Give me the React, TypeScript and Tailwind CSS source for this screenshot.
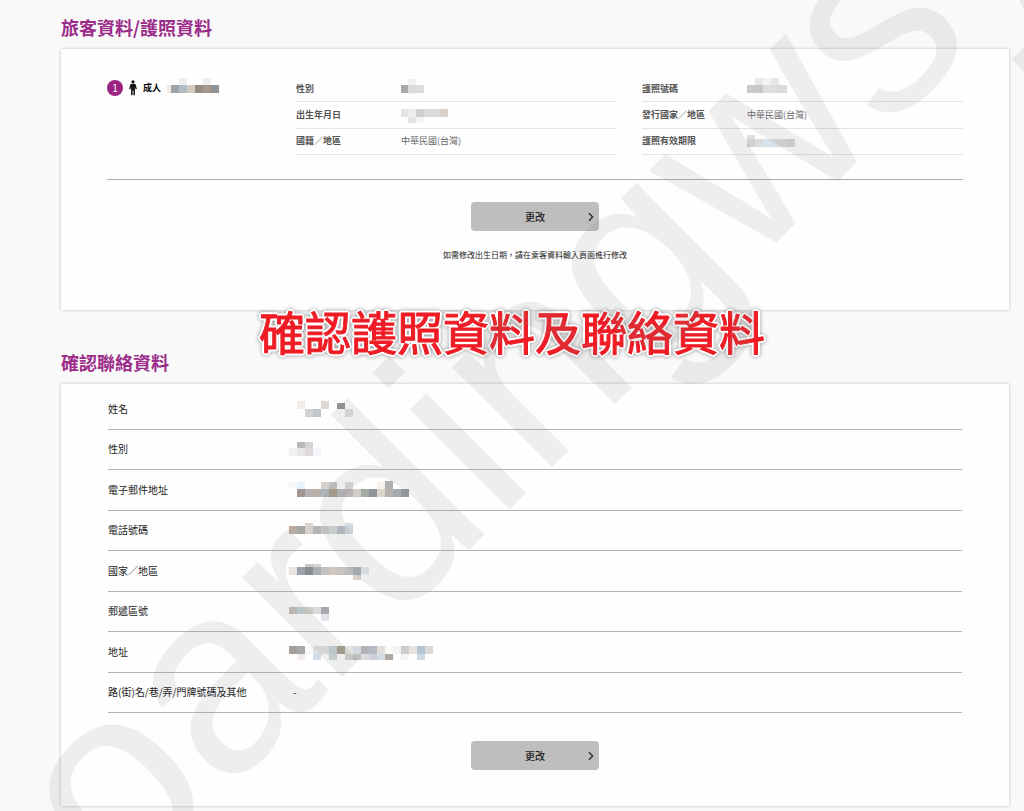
import type { ReactNode } from "react";

type Strip = { x: number; y: number; h?: number; cells: string[] };

const CELL = 8;

/** Pixelated block that hides a private value. An empty string leaves a cell blank. */
function Redacted({ strips, width, height = 24 }: { strips: Strip[]; width: number; height?: number }) {
  return (
    <svg width={width} height={height} viewBox={`0 0 ${width} ${height}`} aria-hidden="true" shapeRendering="crispEdges">
      {strips.flatMap((s, i) =>
        s.cells.map((c, j) =>
          c ? <rect key={`${i}-${j}`} x={s.x + j * CELL} y={s.y} width={CELL} height={s.h ?? 8} fill={c} /> : null,
        ),
      )}
    </svg>
  );
}

function SectionTitle({ children }: { children: ReactNode }) {
  return <h2 className="mb-2.5 text-[18px] leading-6 font-bold text-[#9b2c8a]">{children}</h2>;
}

function Card({ children }: { children: ReactNode }) {
  return (
    <div className="flex flex-col bg-[#fefefe] px-[46px] shadow-[0_0_3px_rgba(0,0,0,0.25)]">{children}</div>
  );
}

function EditButton() {
  return (
    <button
      type="button"
      className="relative h-[29px] w-32 self-center rounded-[4px] bg-[#bdbebd] text-[10px] font-medium text-[#222]"
    >
      更改
      <svg className="absolute top-2.5 right-1 h-[10px] w-2" viewBox="0 0 8 10" fill="none" aria-hidden="true">
        <path d="M2 1.2 L5.6 5 L2 8.8" stroke="#333" strokeWidth="1.5" />
      </svg>
    </button>
  );
}

function PersonIcon() {
  return (
    <svg className="h-4 w-2" viewBox="0 0 8 16" fill="#111" aria-hidden="true">
      <circle cx="4" cy="1.9" r="1.6" />
      <path d="M2.4 4h3.2c.8 0 1.1.4 1.300 1.100L7.800 9l-1.100.4L5.900 7V15.300H4.400V10.500H3.600v4.800H2.100V7L1.300 9.400.2 9l.9-3.900C1.300 4.400 1.600 4 2.400 4z" />
    </svg>
  );
}

type Field = { label: string; value: ReactNode };

const personal: Field[] = [
  {
    label: "性別",
    value: (
      <Redacted
        width={24}
        strips={[
          { x: 7, y: 2, h: 6, cells: ["#f1f1f3"] },
          { x: -1, y: 8, cells: ["#a9a9a9", "#dadadc", "#dcdddd"] },
          { x: 7, y: 16, h: 2, cells: ["#f4f2f4"] },
        ]}
      />
    ),
  },
  {
    label: "出生年月日",
    value: (
      <Redacted
        width={48}
        strips={[
          { x: -1, y: 6, cells: ["#e8e4e5", "#ededee", "#cfcfd0", "#dcdcdd", "#dadbdc", "#d8d0ca"] },
          { x: 7, y: 14, h: 6, cells: ["#e5e5e6", "#f5f5f5"] },
        ]}
      />
    ),
  },
  { label: "國籍／地區", value: "中華民國(台灣)" },
];

const passport: Field[] = [
  {
    label: "護照號碼",
    value: (
      <Redacted
        width={48}
        strips={[
          { x: 8, y: 1, h: 7, cells: ["#e9e9e8", "#f2f2f1", "#e8e7e4"] },
          { x: 0, y: 8, cells: ["#cacaca", "#c6c7c9", "#dedede", "#dddddd", "#dbdbdc"] },
        ]}
      />
    ),
  },
  { label: "發行國家／地區", value: "中華民國(台灣)" },
  {
    label: "護照有效期限",
    value: (
      <Redacted
        width={48}
        strips={[
          { x: 0, y: 6, h: 4, cells: ["#dededc"] },
          { x: 0, y: 10, cells: ["#d2d2d1", "#dcdcdb", "#d9e3ec", "#d8dee2", "#d9dbdb", "#d5d5d5"] },
        ]}
      />
    ),
  },
];

const contact: Field[] = [
  {
    label: "姓名",
    value: (
      <Redacted
        width={64}
        strips={[
          { x: 8, y: 4, cells: ["#f3ebe8", "", "", "#ddd8d2"] },
          { x: 16, y: 12, cells: ["#cfd1d2", "#bfc7ca"] },
          { x: 48, y: 6, h: 6, cells: ["#909193"] },
          { x: 56, y: 12, cells: ["#dedede"] },
        ]}
      />
    ),
  },
  {
    label: "性別",
    value: (
      <Redacted
        width={40}
        strips={[
          { x: 8, y: 5, h: 6, cells: ["#b7b8b8", "#d3d4d6"] },
          { x: 0, y: 11, cells: ["#f1f1f1", "#e7e6e8", "#e0dbdb", "#f6f6fa"] },
        ]}
      />
    ),
  },
  {
    label: "電子郵件地址",
    value: (
      <Redacted
        width={120}
        strips={[
          { x: 0, y: 4, h: 7, cells: ["#f8f8f9", "#e8f2fb", "", "", "#d5d0cb", "#c5c4c1", "", "#d9dbdd", "", "", "", "#f6f2ef"] },
          { x: 96, y: 3, cells: ["#b2b0ae"] },
          {
            x: 8,
            y: 11,
            cells: [
              "#a0968f", "#b5b1b0", "#b8b0a8", "#aeb4b8", "#a99c8c", "#b4b5b7", "#bcb6b6",
              "#d4cdc6", "#a5aba6", "#909497", "#dfd6cb", "#b5b2b0", "#a5adb3", "#929698",
            ],
          },
        ]}
      />
    ),
  },
  {
    label: "電話號碼",
    value: (
      <Redacted
        width={64}
        strips={[
          { x: 16, y: 5, h: 3, cells: ["#d9d5d0", "", "", "", "", "#d8dde1"] },
          { x: 0, y: 8, cells: ["#bbaba1", "#a6a7a5", "#d6d1cc", "#b3b6b7", "#c9c9cb", "#d3d7d8", "#b6bec7", "#ced5da"] },
        ]}
      />
    ),
  },
  {
    label: "國家／地區",
    value: (
      <Redacted
        width={80}
        strips={[
          { x: 16, y: 5, h: 3, cells: ["#c9c8c5", "#d4d3d1"] },
          { x: 0, y: 8, cells: ["#e7e4e1", "#9ba4ad", "#888d92", "#a9b1b5", "#c5c1c3", "#d2c5b9", "#c4c3c1", "#bcbbbe", "#a8afb4"] },
          { x: 72, y: 8, h: 7, cells: ["#e0eaf1"] },
          { x: 64, y: 16, h: 5, cells: ["#d9d2cd"] },
        ]}
      />
    ),
  },
  {
    label: "郵遞區號",
    value: (
      <Redacted
        width={40}
        strips={[
          { x: 0, y: 8, h: 7, cells: ["#c0bdb9", "#c2d0d7", "#ceccc6", "#dadada", "#a7a8ac"] },
          { x: 32, y: 15, h: 7, cells: ["#e3e4e9"] },
        ]}
      />
    ),
  },
  {
    label: "地址",
    value: (
      <Redacted
        width={144}
        strips={[
          {
            x: 0,
            y: 6,
            cells: [
              "#a69e98", "#a9a8aa", "#f8f8f8", "#dfe2e6", "#e0e0e1", "#c5cfd6", "#a39f8e", "#e3e3e1", "#d1d8df",
              "#b5b0b4", "#b6bac7", "#e2dfdc", "#fbfbf6", "#f3f3f1", "#cdcecb", "#e6e3df", "#b6c5d2", "#d9d9da",
            ],
          },
          {
            x: 0,
            y: 14,
            h: 6,
            cells: ["", "#f2ecee", "", "#cedceb", "", "#cfd5d6", "", "#d0d3d1", "#bfbfbd", "#dbdadd", "#ceced8", "#d5dce7", "#afa7a1", "", "#f5f5f5", "", "#cfd8df"],
          },
        ]}
      />
    ),
  },
  { label: "路(街)名/巷/弄/門牌號碼及其他", value: <span className="pl-1">-</span> },
];

function PassengerFields({ fields }: { fields: Field[] }) {
  return (
    <dl className="grid min-h-[79px] flex-1 auto-rows-fr text-[9px] leading-3">
      {fields.map((f) => (
        <div key={f.label} className="flex items-center border-b border-[#e4e4e4]">
          <dt className="w-[105px] shrink-0 font-bold text-[#555]">{f.label}</dt>
          <dd className="text-[#666]">{f.value}</dd>
        </div>
      ))}
    </dl>
  );
}

export default function App() {
  return (
    <div className="relative min-h-screen overflow-hidden bg-[#f9f9f9] pt-[15px] pr-[15px] pb-[5px] pl-[61px] font-['Noto_Sans_CJK_TC','Noto_Sans',sans-serif]">
      <main>
        <section>
          <SectionTitle>旅客資料/護照資料</SectionTitle>
          <Card>
            <div className="flex border-b border-[#aaa] pt-[27px] pb-6">
              <div className="flex h-[23px] w-[189px] shrink-0 items-center">
                <span className="flex size-4 items-center justify-center rounded-full bg-[#9b2482] text-[10px] leading-none text-white">
                  1
                </span>
                <span className="ml-1.5">
                  <PersonIcon />
                </span>
                <span className="ml-1.5 text-[9px] font-bold text-black">成人</span>
                <span className="ml-1.5">
                  <Redacted
                    width={52}
                    strips={[
                      { x: 12, y: 2, h: 7, cells: ["#eeeeef", "", "", "#eeeeee"] },
                      { x: -4, y: 9, cells: ["#f0e9e4", "#9ea5a9", "#b2bac4", "#d3cac0", "#978b82", "#a89687", "#8f9395"] },
                    ]}
                  />
                </span>
              </div>
              <div className="flex flex-1 gap-[25px]">
                <PassengerFields fields={personal} />
                <PassengerFields fields={passport} />
              </div>
            </div>
            <div className="flex flex-col pt-[22px] pb-[49px]">
              <EditButton />
              <p className="mt-[18px] text-center text-[8px] leading-3 text-[#222]">
                如需修改出生日期，請在乘客資料輸入頁面進行修改
              </p>
            </div>
          </Card>
        </section>

        <section className="mt-10">
          <SectionTitle>確認聯絡資料</SectionTitle>
          <Card>
            <dl className="mx-px mt-[5px] grid min-h-[324px] auto-rows-fr text-[10px] leading-4 text-[#222]">
              {contact.map((f) => (
                <div key={f.label} className="flex items-center border-b border-[#b4b4b4]">
                  <dt className="w-[181px] shrink-0">{f.label}</dt>
                  <dd>{f.value}</dd>
                </div>
              ))}
            </dl>
            <div className="flex flex-col pt-7 pb-9">
              <EditButton />
            </div>
          </Card>
        </section>
      </main>

      <p className="absolute inset-x-0 top-[306px] text-center text-[46px] leading-[48px] font-normal text-[#ee1c25] [-webkit-text-stroke:1px_#ee1c25] [filter:drop-shadow(1px_1px_0_white)_drop-shadow(-1px_-1px_0_white)_drop-shadow(1px_-1px_0_white)_drop-shadow(-1px_1px_0_white)_drop-shadow(0_0_2px_rgba(0,0,0,0.4))]">
        確認護照資料及聯絡資料
      </p>

      <svg className="pointer-events-none absolute inset-0 size-full" aria-hidden="true">
        <text
          transform="translate(14 1005) rotate(-45)"
          fontSize="267"
          fill="#808080"
          fillOpacity="0.13"
          className="font-['Liberation_Sans',Arial,sans-serif]"
        >
          boardingwsy
        </text>
      </svg>
    </div>
  );
}
